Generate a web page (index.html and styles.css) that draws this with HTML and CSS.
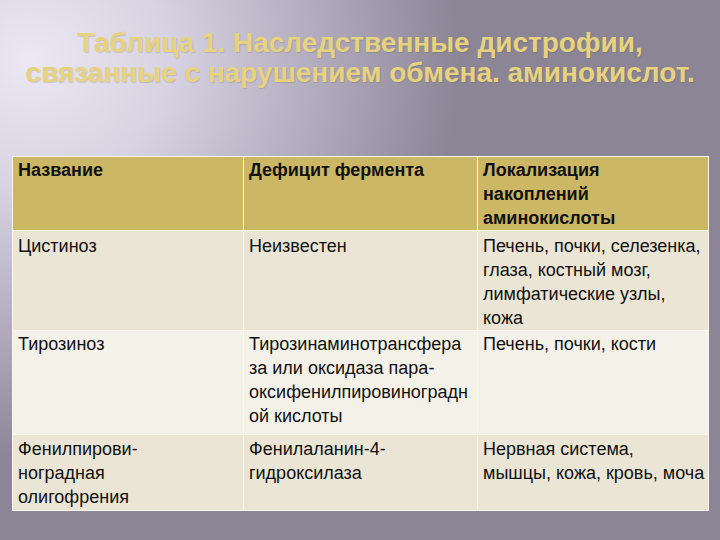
FILE: index.html
```html
<!DOCTYPE html>
<html lang="ru">
<head>
<meta charset="utf-8">
<title>Таблица 1</title>
<link rel="stylesheet" href="styles.css">
</head>
<body>
<div class="slide">
  <h1 class="title">Таблица 1. Наследственные дистрофии,<br>связанные с нарушением обмена. аминокислот.</h1>
  <table class="grid">
    <colgroup><col class="c1"><col class="c2"><col class="c3"></colgroup>
    <tr class="head">
      <td>Название</td>
      <td>Дефицит фермента</td>
      <td>Локализация<br>накоплений<br>аминокислоты</td>
    </tr>
    <tr class="row odd r1">
      <td>Цистиноз</td>
      <td>Неизвестен</td>
      <td>Печень, почки, селезенка,<br>глаза, костный мозг,<br>лимфатические узлы,<br>кожа</td>
    </tr>
    <tr class="row even r2">
      <td>Тирозиноз</td>
      <td>Тирозинаминотрансфера<br>за или оксидаза пара-<br>оксифенилпировиноградн<br>ой кислоты</td>
      <td>Печень, почки, кости</td>
    </tr>
    <tr class="row odd r3">
      <td>Фенилпирови-<br>ноградная<br>олигофрения</td>
      <td>Фенилаланин-4-<br>гидроксилаза</td>
      <td>Нервная система,<br>мышцы, кожа, кровь, моча</td>
    </tr>
  </table>
</div>
</body>
</html>
```
FILE: styles.css
```css
html, body {
  margin: 0;
  padding: 0;
}
body {
  width: 720px;
  height: 540px;
  overflow: hidden;
  font-family: "Liberation Sans", Arial, sans-serif;
}
.slide {
  width: 720px;
  height: 540px;
  background:
    radial-gradient(ellipse 430px 400px at 30px 60px, #ebe7f3 0%, #d8d3e2 32%, #aea8ba 70%, rgba(140,134,152,0) 100%),
    #8b8596;
  overflow: hidden;
}
.title {
  margin: 0;
  padding-top: 28px;
  text-align: center;
  font-size: 28px;
  line-height: 30px;
  font-weight: bold;
  color: #e6d27f;
  text-shadow: 1px 1px 1px rgba(80, 70, 40, 0.18);
}
.grid {
  margin: 68px 0 0 12px;
  width: 696px;
  border-collapse: collapse;
  table-layout: fixed;
  font-size: 18px;
  line-height: 24px;
  color: #111;
}
.c1 { width: 231px; }
.c2 { width: 234px; }
.c3 { width: 231px; }
.grid td {
  vertical-align: top;
  padding: 1px 2px 0 5px;
  border: 1px solid #fbf7e9;
  white-space: nowrap;
  overflow: visible;
}
.head td {
  background: #ccb764;
  font-weight: bold;
  height: 71px;
}
.head td + td { border-left-color: #efe3b4; }
.odd td { background: #ebe5d5; }
.even td { background: #f4f1e8; }
.r1 td { height: 96px; padding-top: 3px; }
.r2 td { height: 102px; }
.r3 td { height: 73px; padding-top: 2px; }
```
